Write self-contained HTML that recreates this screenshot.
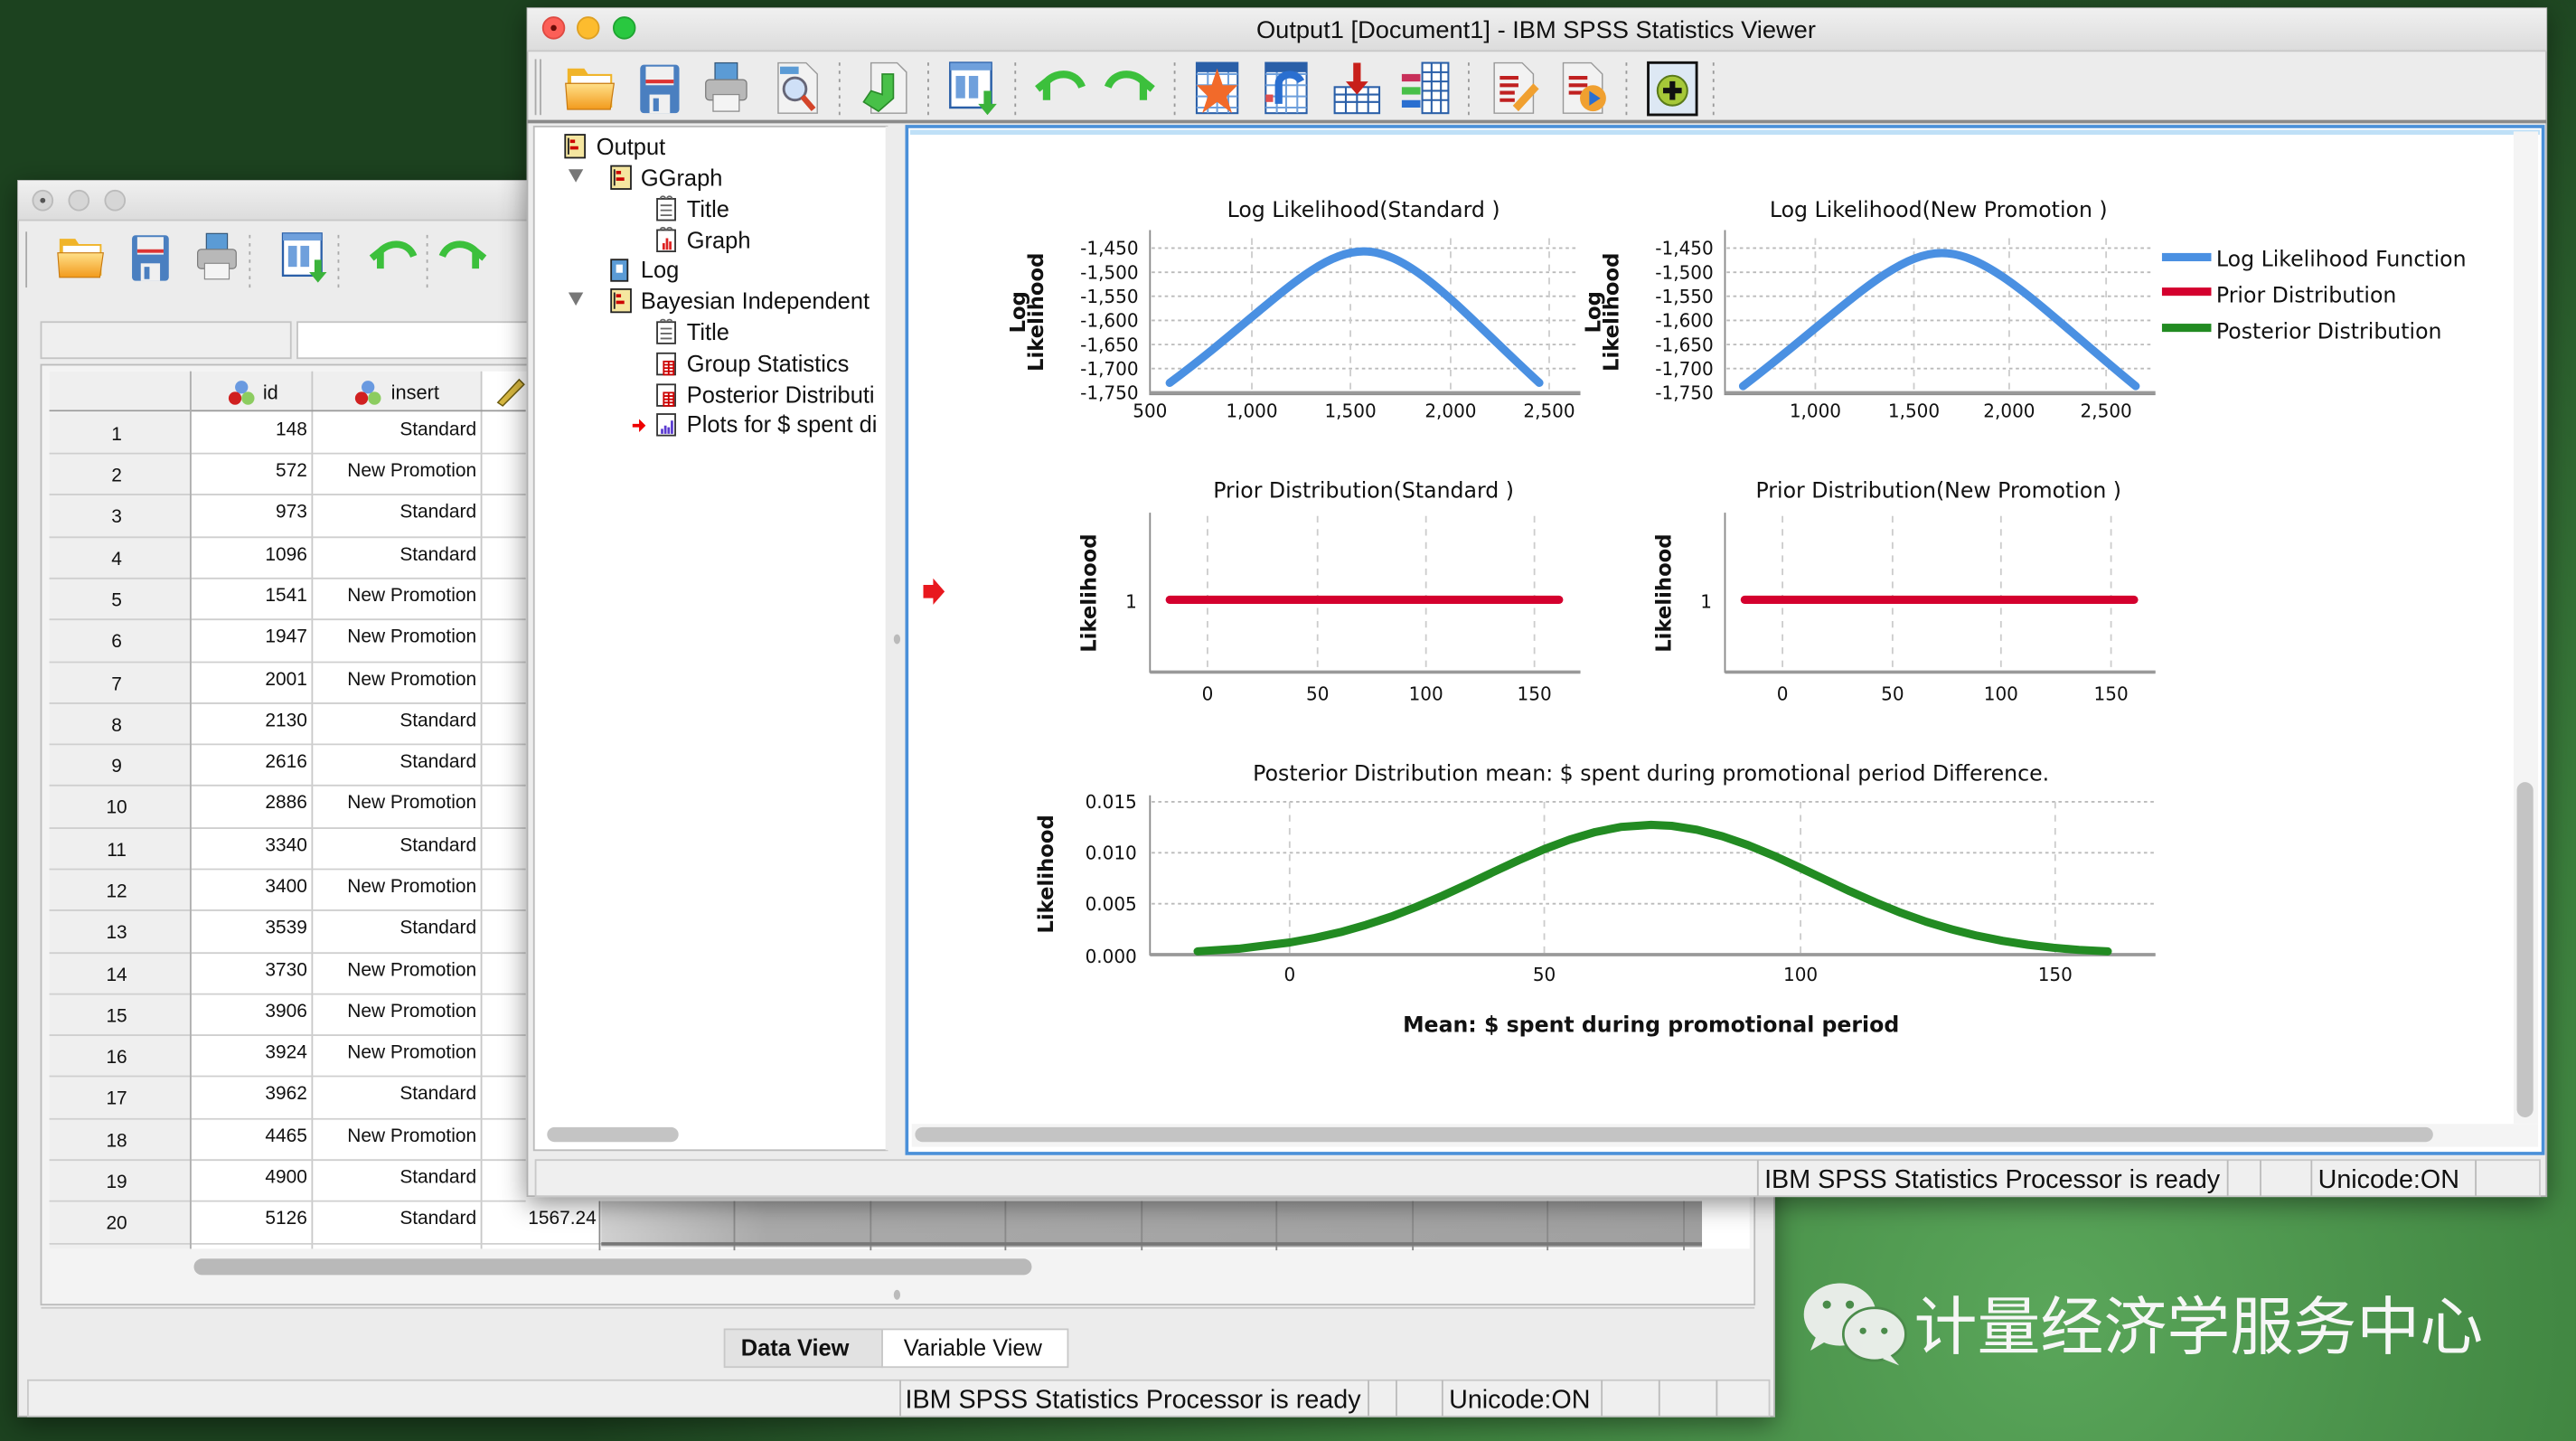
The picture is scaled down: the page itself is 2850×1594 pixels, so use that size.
<!DOCTYPE html>
<html><head><meta charset="utf-8"><style>
html,body{margin:0;padding:0;width:2850px;height:1594px;overflow:hidden;background:#1f4a22}
svg{display:block}
text{font-family:"Liberation Sans","Noto Sans CJK SC",sans-serif;fill:#111}
.t13{font-size:14px}.t11{font-size:11.5px}.t12{font-size:12px}.t14{font-size:14px}.t15{font-size:15.8px}
.b{font-weight:bold}
.ch text{font-family:"DejaVu Sans",sans-serif}
.ch .tt{font-size:13px}
</style></head><body>
<svg width="2850" height="1594" viewBox="0 0 1568 877" xmlns="http://www.w3.org/2000/svg">
<defs>
<radialGradient id="bg" cx="1250" cy="800" r="900" gradientUnits="userSpaceOnUse">
<stop offset="0" stop-color="#5aa65a"/><stop offset="0.45" stop-color="#3b7f3c"/><stop offset="1" stop-color="#1c421f"/></radialGradient>
<linearGradient id="tb" x1="0" y1="0" x2="0" y2="1"><stop offset="0" stop-color="#f0f0f0"/><stop offset="1" stop-color="#dcdcdc"/></linearGradient>
<linearGradient id="fold" x1="0" y1="0" x2="0" y2="1"><stop offset="0" stop-color="#ffe08a"/><stop offset="1" stop-color="#f29a1c"/></linearGradient>
<linearGradient id="gr" x1="0" y1="0" x2="1" y2="0"><stop offset="0" stop-color="#d0d0d0"/><stop offset="0.15" stop-color="#a9a9a9"/><stop offset="1" stop-color="#a0a0a0"/></linearGradient>
<filter id="sh" x="-5%" y="-5%" width="110%" height="115%"><feDropShadow dx="0" dy="4" stdDeviation="8" flood-color="#000" flood-opacity="0.45"/></filter>
<symbol id="folder" viewBox="0 0 30 30"><path d="M3 5h9l2 3h13v18H3z" fill="#f0b429"/><rect x="5" y="9" width="21" height="6" fill="#fff"/><path d="M2 13h26l-2 14H3z" fill="url(#fold)" stroke="#c87a10" stroke-width=".6"/></symbol>
<symbol id="save" viewBox="0 0 30 30"><rect x="5" y="3" width="21" height="26" rx="2" fill="#4a7fc0"/><rect x="8" y="4" width="15" height="10" fill="#f0f0f0"/><rect x="8" y="11" width="15" height="2" fill="#d33"/><rect x="10" y="19" width="11" height="10" fill="#f0f0f0"/><rect x="12" y="21" width="3" height="7" fill="#4a7fc0"/></symbol>
<symbol id="print" viewBox="0 0 30 30"><rect x="9" y="2" width="12" height="10" fill="#5b9bd5" stroke="#357" stroke-width=".6"/><rect x="4" y="11" width="22" height="11" rx="2" fill="#b8b8b8" stroke="#777" stroke-width=".6"/><rect x="8" y="19" width="14" height="9" fill="#f4f4f4" stroke="#888" stroke-width=".6"/></symbol>
<symbol id="prev" viewBox="0 0 30 30"><path d="M5 2h15l6 6v21H5z" fill="#f2f2f2" stroke="#999" stroke-width=".7"/><rect x="6" y="4" width="10" height="4" fill="#5b9bd5"/><circle cx="14" cy="16" r="6" fill="#cfe0f7" stroke="#667" stroke-width="1.4"/><path d="M18 20l6 7" stroke="#d4452a" stroke-width="3"/></symbol>
<symbol id="export" viewBox="0 0 30 30"><path d="M9 2h14l5 5v22H9z" fill="#f2f2f2" stroke="#999" stroke-width=".7"/><path d="M15 8v11l-6-2-4 6 8 5 8-7V8z" fill="#48c048" stroke="#2a8a2a" stroke-width=".8"/></symbol>
<symbol id="desig" viewBox="0 0 30 30"><rect x="3" y="2" width="22" height="24" fill="#fff" stroke="#2a5fa8" stroke-width="1.2"/><rect x="3" y="2" width="22" height="4" fill="#6fa0dc"/><rect x="6" y="9" width="5" height="12" fill="#6fa0dc"/><rect x="13" y="9" width="5" height="12" fill="#6fa0dc"/><path d="M21 17v7h-3l5 6 5-6h-3v-7z" fill="#3bb33b"/></symbol>
<symbol id="undo" viewBox="0 0 30 30"><path d="M8 22V12l-5 4M8 12c6-6 16-5 19 3" fill="none" stroke="#3cc03c" stroke-width="4" stroke-linejoin="round"/></symbol>
<symbol id="redo" viewBox="0 0 30 30"><path d="M22 22V12l5 4M22 12c-6-6-16-5-19 3" fill="none" stroke="#3cc03c" stroke-width="4" stroke-linejoin="round"/></symbol>
<symbol id="grid" viewBox="0 0 30 30"><rect x="3" y="2" width="22" height="27" fill="#fff" stroke="#2a5fa8"/><path d="M3 8h22M3 14h22M3 20h22M3 26h22M9 2v27M14 2v27M20 2v27" stroke="#6fa0dc" stroke-width="1"/><rect x="3" y="2" width="22" height="5" fill="#2a5fa8"/></symbol>
<symbol id="star" viewBox="0 0 30 30"><use href="#grid"/><path d="M14 5l3 9h8l-6 6 3 9-8-6-8 6 3-9-6-6h8z" fill="#f26a2a"/></symbol>
<symbol id="gotoc" viewBox="0 0 30 30"><use href="#grid"/><path d="M10 24V13c0-5 9-7 12-1" fill="none" stroke="#2a6fd0" stroke-width="4"/><rect x="3" y="19" width="4" height="4" fill="#e05050"/></symbol>
<symbol id="insv" viewBox="0 0 30 30"><rect x="3" y="15" width="24" height="14" fill="#fff" stroke="#2a5fa8"/><path d="M3 19h24M3 23h24M9 15v14M15 15v14M21 15v14" stroke="#2a5fa8"/><path d="M13 2h4v10h4l-6 7-6-7h4z" fill="#c8201a"/></symbol>
<symbol id="splt" viewBox="0 0 30 30"><rect x="13" y="2" width="14" height="27" fill="#fff" stroke="#2a5fa8"/><path d="M13 7h14M13 12h14M13 17h14M13 22h14M18 2v27M23 2v27" stroke="#2a5fa8"/><rect x="2" y="8" width="10" height="4" fill="#c8305a"/><rect x="2" y="15" width="10" height="4" fill="#48c048"/><rect x="2" y="22" width="10" height="4" fill="#2a6fd0"/></symbol>
<symbol id="edit" viewBox="0 0 30 30"><path d="M4 2h15l6 6v21H4z" fill="#f2f2f2" stroke="#999" stroke-width=".7"/><path d="M7 10h10M7 14h10M7 18h8M7 22h8" stroke="#c02020" stroke-width="2"/><path d="M14 25l11-12 3 3-11 12z" fill="#f0a030"/></symbol>
<symbol id="play" viewBox="0 0 30 30"><path d="M4 2h15l6 6v21H4z" fill="#f2f2f2" stroke="#999" stroke-width=".7"/><path d="M7 10h10M7 14h10M7 18h8" stroke="#c02020" stroke-width="2"/><circle cx="20" cy="21" r="7" fill="#f0a030"/><path d="M18 17l6 4-6 4z" fill="#2a6fd0"/></symbol>
<symbol id="plus" viewBox="0 0 30 30"><rect x="2" y="1" width="26" height="28" fill="#dde8f4" stroke="#111" stroke-width="1.4"/><circle cx="15" cy="16" r="8" fill="#a6c838" stroke="#5a7a1a"/><path d="M15 11v10M10 16h10" stroke="#111" stroke-width="3"/></symbol>
<symbol id="book" viewBox="0 0 16 16"><rect x="2" y="1" width="12" height="14" fill="#f5e6a0" stroke="#222" stroke-width="1"/><rect x="5" y="4" width="3" height="2" fill="#c00"/><rect x="5" y="8" width="5" height="2" fill="#c00"/><path d="M4 3v10" stroke="#222"/></symbol>
<symbol id="page" viewBox="0 0 16 16"><rect x="3" y="2" width="11" height="13" fill="#fff" stroke="#333"/><path d="M5 6h7M5 9h7M5 12h7" stroke="#666"/><path d="M5 2c0-2 3-2 3 0M9 2c0-2 3-2 3 0" fill="none" stroke="#666"/></symbol>
<symbol id="gph" viewBox="0 0 16 16"><rect x="3" y="2" width="11" height="13" fill="#fff" stroke="#333"/><path d="M7 14v-4M9 14v-7M11 14v-5" stroke="#d22" stroke-width="1.5"/><path d="M5 2c0-2 3-2 3 0M9 2c0-2 3-2 3 0" fill="none" stroke="#666"/></symbol>
<symbol id="tbl" viewBox="0 0 16 16"><rect x="3" y="2" width="11" height="13" fill="#fff" stroke="#333"/><rect x="7" y="7" width="6" height="8" fill="#fff" stroke="#c00"/><path d="M7 9h6M7 11h6M7 13h6M10 7v8" stroke="#c00"/></symbol>
<symbol id="plots" viewBox="0 0 16 16"><rect x="3" y="2" width="11" height="13" fill="#fff" stroke="#333"/><path d="M6 14v-3M8 14v-5M10 14v-4M12 14v-8" stroke="#5a3ad0" stroke-width="1.5"/></symbol>
<symbol id="logi" viewBox="0 0 16 16"><rect x="3" y="2" width="10" height="13" fill="#5b9bd5" stroke="#222"/><rect x="6" y="5" width="4" height="5" fill="#fff"/></symbol>
<symbol id="var" viewBox="0 0 16 16"><circle cx="8" cy="5" r="3.5" fill="#6a9ae0"/><circle cx="4.5" cy="11" r="3.5" fill="#d02020"/><circle cx="11.5" cy="11" r="3.5" fill="#8ccc60"/></symbol>
</defs>

<rect width="1568" height="877" fill="url(#bg)"/>

<!-- ============ DATA EDITOR ============ -->
<g filter="url(#sh)">
<rect x="11" y="110" width="1069" height="752" fill="#ececec" stroke="#b8b8b8"/>
</g>
<rect x="11" y="110" width="1069" height="24" fill="url(#tb)"/>
<circle cx="26" cy="122" r="6" fill="#d6d6d6" stroke="#bbb"/><circle cx="26" cy="122" r="1.6" fill="#555"/>
<circle cx="48" cy="122" r="6" fill="#d6d6d6" stroke="#bbb"/><circle cx="70" cy="122" r="6" fill="#d6d6d6" stroke="#bbb"/>
<line x1="11" y1="134" x2="1080" y2="134" stroke="#c8c8c8"/>
<line x1="16" y1="141" x2="16" y2="175" stroke="#aaa"/>
<use href="#folder" x="33" y="140" width="32" height="32"/>
<use href="#save" x="75" y="140" width="32" height="32"/>
<use href="#print" x="116" y="140" width="32" height="32"/>
<use href="#desig" x="169" y="140" width="32" height="32"/>
<use href="#undo" x="223" y="140" width="32" height="32"/>
<use href="#redo" x="266" y="140" width="32" height="32"/>
<path d="M152 143v32M206 143v32M260 143v32" stroke="#aaa" stroke-dasharray="2 3"/>
<rect x="25" y="196" width="152" height="22" fill="#efefef" stroke="#c4c4c4"/>
<rect x="181" y="196" width="890" height="22" fill="#fff" stroke="#c4c4c4"/>
<rect x="25" y="222" width="1043" height="572" fill="#f3f3f3" stroke="#bcbcbc"/>
<rect x="30" y="226" width="1035" height="534" fill="#fff"/>
<rect x="30" y="226" width="263" height="24" fill="#efefef"/>
<path d="M116 226v534M190 226v534M293 226v534" stroke="#c8c8c8"/>
<line x1="30" y1="250" x2="320" y2="250" stroke="#999"/>
<use href="#var" x="138" y="230" width="18" height="18"/><text x="160" y="243" class="t12">id</text>
<use href="#var" x="215" y="230" width="18" height="18"/><text x="238" y="243" class="t12">insert</text>
<path d="M303 245l13-14 3 3-13 13z" fill="#d8b840" stroke="#6a5a10" stroke-width=".8"/>
<g font-size="11.5">
<rect x="30" y="251" width="86" height="509" fill="#efefef"/>
<path d="M30 276h290M30 301h290M30 327h290M30 352h290M30 377h290M30 403h290M30 428h290M30 453h290M30 478h290M30 504h290M30 529h290M30 554h290M30 580h290M30 605h290M30 630h290M30 655h290M30 681h290M30 706h290M30 731h290M30 757h337" stroke="#cfcfcf"/>
<path d="M116 226v534" stroke="#b0b0b0"/>
<g text-anchor="middle">
<text x="71" y="268">1</text><text x="71" y="293">2</text><text x="71" y="318">3</text><text x="71" y="344">4</text><text x="71" y="369">5</text><text x="71" y="394">6</text><text x="71" y="420">7</text><text x="71" y="445">8</text><text x="71" y="470">9</text><text x="71" y="495">10</text><text x="71" y="521">11</text><text x="71" y="546">12</text><text x="71" y="571">13</text><text x="71" y="597">14</text><text x="71" y="622">15</text><text x="71" y="647">16</text><text x="71" y="672">17</text><text x="71" y="698">18</text><text x="71" y="723">19</text><text x="71" y="748">20</text>
</g>
<g text-anchor="end">
<text x="187" y="265">148</text><text x="187" y="290">572</text><text x="187" y="315">973</text><text x="187" y="341">1096</text><text x="187" y="366">1541</text><text x="187" y="391">1947</text><text x="187" y="417">2001</text><text x="187" y="442">2130</text><text x="187" y="467">2616</text><text x="187" y="492">2886</text><text x="187" y="518">3340</text><text x="187" y="543">3400</text><text x="187" y="568">3539</text><text x="187" y="594">3730</text><text x="187" y="619">3906</text><text x="187" y="644">3924</text><text x="187" y="669">3962</text><text x="187" y="695">4465</text><text x="187" y="720">4900</text><text x="187" y="745">5126</text>
<text x="290" y="265">Standard</text><text x="290" y="290">New Promotion</text><text x="290" y="315">Standard</text><text x="290" y="341">Standard</text><text x="290" y="366">New Promotion</text><text x="290" y="391">New Promotion</text><text x="290" y="417">New Promotion</text><text x="290" y="442">Standard</text><text x="290" y="467">Standard</text><text x="290" y="492">New Promotion</text><text x="290" y="518">Standard</text><text x="290" y="543">New Promotion</text><text x="290" y="568">Standard</text><text x="290" y="594">New Promotion</text><text x="290" y="619">New Promotion</text><text x="290" y="644">New Promotion</text><text x="290" y="669">Standard</text><text x="290" y="695">New Promotion</text><text x="290" y="720">Standard</text><text x="290" y="745">Standard</text>
<text x="363" y="745">1567.24</text>
</g>
</g>
<rect x="366" y="731" width="670" height="28" fill="url(#gr)"/>
<path d="M365 731v30M447 731v30M530 731v30M612 731v30M695 731v30M777 731v30M860 731v30M942 731v30M1025 731v30" stroke="#8a8a8a"/>
<line x1="366" y1="757" x2="1036" y2="757" stroke="#777" stroke-width="2"/>
<rect x="118" y="766" width="510" height="10" rx="5" fill="#b9b9b9"/>
<ellipse cx="546" cy="788" rx="2" ry="3" fill="#bbb"/>
<line x1="25" y1="796" x2="1068" y2="796" stroke="#c8c8c8"/>
<rect x="441" y="809" width="96" height="23" fill="#e2e2e2" stroke="#c8c8c8"/>
<rect x="537" y="809" width="113" height="23" fill="#fff" stroke="#c8c8c8"/>
<text x="451" y="825" class="t14 b">Data View</text>
<text x="550" y="825" class="t14">Variable View</text>
<rect x="17" y="840" width="1060" height="22" fill="#efefef" stroke="#c8c8c8"/>
<path d="M548 840v22M833 840v22M850 840v22M878 840v22M975 840v22M1010 840v22M1045 840v22" stroke="#bbb"/>
<text x="551" y="857" class="t15">IBM SPSS Statistics Processor is ready</text>
<text x="882" y="857" class="t15">Unicode:ON</text>

<!-- ============ VIEWER ============ -->
<g filter="url(#sh)">
<rect x="321" y="5" width="1229" height="723" fill="#ececec" stroke="#b0b0b0"/>
</g>
<rect x="321" y="5" width="1229" height="26" fill="url(#tb)"/>
<circle cx="337" cy="17" r="6.5" fill="#fc5f57" stroke="#de4a42"/><circle cx="337" cy="17" r="1.8" fill="#6a0d08"/>
<circle cx="358" cy="17" r="6.5" fill="#fdbc2e" stroke="#dea023"/>
<circle cx="380" cy="17" r="6.5" fill="#29c840" stroke="#1fa431"/>
<text x="935" y="23" font-size="15" text-anchor="middle" fill="#333">Output1 [Document1] - IBM SPSS Statistics Viewer</text>
<line x1="321" y1="31" x2="1550" y2="31" stroke="#c8c8c8"/>
<line x1="326" y1="36" x2="326" y2="70" stroke="#aaa"/><line x1="329" y1="36" x2="329" y2="70" stroke="#aaa"/>
<use href="#folder" x="342" y="36" width="34" height="34"/>
<use href="#save" x="384" y="36" width="34" height="34"/>
<use href="#print" x="425" y="36" width="34" height="34"/>
<use href="#prev" x="468" y="36" width="34" height="34"/>
<use href="#export" x="520" y="36" width="34" height="34"/>
<use href="#desig" x="575" y="36" width="34" height="34"/>
<use href="#undo" x="628" y="36" width="34" height="34"/>
<use href="#redo" x="671" y="36" width="34" height="34"/>
<use href="#star" x="725" y="36" width="34" height="34"/>
<use href="#gotoc" x="767" y="36" width="34" height="34"/>
<use href="#insv" x="809" y="36" width="34" height="34"/>
<use href="#splt" x="851" y="36" width="34" height="34"/>
<use href="#edit" x="905" y="36" width="34" height="34"/>
<use href="#play" x="947" y="36" width="34" height="34"/>
<use href="#plus" x="1001" y="37" width="34" height="34"/>
<path d="M511 38v32M565 38v32M618 38v32M715 38v32M894 38v32M990 38v32M1043 38v32" stroke="#999" stroke-dasharray="2 3"/>
<line x1="321" y1="74" x2="1550" y2="74" stroke="#8a8a8a" stroke-width="2"/>

<!-- tree pane -->
<rect x="325" y="77" width="215" height="623" fill="#fff" stroke="#bbb"/>
<g class="t13">
<use href="#book" x="342" y="81" width="16" height="16"/><text x="363" y="94">Output</text>
<path d="M346 103h9l-4.5 8z" fill="#777"/>
<use href="#book" x="370" y="100" width="16" height="16"/><text x="390" y="113">GGraph</text>
<use href="#page" x="397" y="119" width="16" height="16"/><text x="418" y="132">Title</text>
<use href="#gph" x="397" y="138" width="16" height="16"/><text x="418" y="151">Graph</text>
<use href="#logi" x="369" y="156" width="16" height="16"/><text x="390" y="169">Log</text>
<path d="M346 178h9l-4.5 8z" fill="#777"/>
<use href="#book" x="370" y="175" width="16" height="16"/><text x="390" y="188">Bayesian Independent</text>
<use href="#page" x="397" y="194" width="16" height="16"/><text x="418" y="207">Title</text>
<use href="#tbl" x="397" y="213" width="16" height="16"/><text x="418" y="226">Group Statistics</text>
<use href="#tbl" x="397" y="232" width="16" height="16"/><text x="418" y="245">Posterior Distributi</text>
<path d="M385 258h4v-3l4 4-4 4v-3h-4z" fill="#e00"/>
<use href="#plots" x="397" y="250" width="16" height="16"/><text x="418" y="263">Plots for $ spent di</text>
</g>
<rect x="539" y="77" width="4" height="623" fill="#ececec"/>
<rect x="333" y="686" width="80" height="9" rx="4.5" fill="#c4c4c4"/>
<ellipse cx="546" cy="389" rx="2" ry="3" fill="#bbb"/>

<!-- content pane -->
<rect x="552" y="77" width="996" height="625" fill="#fff" stroke="#4a90d9" stroke-width="2"/>
<rect x="554" y="79" width="992" height="3" fill="#bfe0f7"/>
<rect x="1530" y="80" width="15" height="604" fill="#f4f4f4"/>
<rect x="1532" y="476" width="10" height="204" rx="5" fill="#c4c4c4"/>
<rect x="555" y="684" width="990" height="14" fill="#f4f4f4"/>
<rect x="557" y="686" width="924" height="9" rx="4.5" fill="#c4c4c4"/>
<path d="M562 356h6v-4l7 8-7 8v-4h-6z" fill="#e8181e"/>

<g class="ch">
<!-- chart 1 -->
<g font-size="11" fill="#222">
<text x="830" y="132" class="tt" text-anchor="middle">Log Likelihood(Standard )</text>
<path d="M701 151h260M701 165.7h260M701 180.3h260M701 195h260M701 209.7h260M701 224.3h260" stroke="#bbb" stroke-dasharray="2 2"/>
<path d="M762 145v94M822 145v94M883 145v94M943 145v94" stroke="#ccc" stroke-dasharray="4 4"/>
<path d="M700 140v100h262" fill="none" stroke="#888"/>
<line x1="700" y1="239" x2="962" y2="239" stroke="#999" stroke-width="2"/>
<g text-anchor="end"><text x="693" y="155">-1,450</text><text x="693" y="169.7">-1,500</text><text x="693" y="184.3">-1,550</text><text x="693" y="199">-1,600</text><text x="693" y="213.7">-1,650</text><text x="693" y="228.3">-1,700</text><text x="693" y="243">-1,750</text></g>
<g text-anchor="middle"><text x="700" y="254">500</text><text x="762" y="254">1,000</text><text x="822" y="254">1,500</text><text x="883" y="254">2,000</text><text x="943" y="254">2,500</text></g>
<path d="M712 233C770 190 800 153 830 153C860 153 890 190 937 233" fill="none" stroke="#4a90e2" stroke-width="5" stroke-linecap="round"/>
<text transform="translate(624,190) rotate(-90)" text-anchor="middle" font-size="12.5" font-weight="bold" fill="#111">Log</text>
<text transform="translate(635,190) rotate(-90)" text-anchor="middle" font-size="12.5" font-weight="bold" fill="#111">Likelihood</text>
</g>
<!-- chart 2 -->
<g font-size="11" fill="#222">
<text x="1180" y="132" class="tt" text-anchor="middle">Log Likelihood(New Promotion )</text>
<path d="M1051 151h260M1051 165.7h260M1051 180.3h260M1051 195h260M1051 209.7h260M1051 224.3h260" stroke="#bbb" stroke-dasharray="2 2"/>
<path d="M1105 145v94M1165 145v94M1223 145v94M1282 145v94" stroke="#ccc" stroke-dasharray="4 4"/>
<path d="M1050 140v100h262" fill="none" stroke="#888"/>
<line x1="1050" y1="239" x2="1312" y2="239" stroke="#999" stroke-width="2"/>
<g text-anchor="end"><text x="1043" y="155">-1,450</text><text x="1043" y="169.7">-1,500</text><text x="1043" y="184.3">-1,550</text><text x="1043" y="199">-1,600</text><text x="1043" y="213.7">-1,650</text><text x="1043" y="228.3">-1,700</text><text x="1043" y="243">-1,750</text></g>
<g text-anchor="middle"><text x="1105" y="254">1,000</text><text x="1165" y="254">1,500</text><text x="1223" y="254">2,000</text><text x="1282" y="254">2,500</text></g>
<path d="M1061 235C1120 190 1152 154 1182 154C1212 154 1245 190 1300 235" fill="none" stroke="#4a90e2" stroke-width="5" stroke-linecap="round"/>
<text transform="translate(974,190) rotate(-90)" text-anchor="middle" font-size="12.5" font-weight="bold" fill="#111">Log</text>
<text transform="translate(985,190) rotate(-90)" text-anchor="middle" font-size="12.5" font-weight="bold" fill="#111">Likelihood</text>
</g>
<!-- legend -->
<rect x="1316" y="154" width="30" height="5" fill="#4a90e2"/><text x="1349" y="162" class="tt">Log Likelihood Function</text>
<rect x="1316" y="175" width="30" height="5" fill="#d4002e"/><text x="1349" y="184" class="tt">Prior Distribution</text>
<rect x="1316" y="197" width="30" height="5" fill="#228b22"/><text x="1349" y="206" class="tt">Posterior Distribution</text>

<!-- prior charts -->
<g font-size="11" fill="#222">
<text x="830" y="303" class="tt" text-anchor="middle">Prior Distribution(Standard )</text>
<path d="M735 314v94M802 314v94M868 314v94M934 314v94" stroke="#ccc" stroke-dasharray="4 4"/>
<path d="M700 312v97h262" fill="none" stroke="#888"/><line x1="700" y1="409" x2="962" y2="409" stroke="#999" stroke-width="2"/>
<text x="692" y="370" text-anchor="end">1</text>
<g text-anchor="middle"><text x="735" y="426">0</text><text x="802" y="426">50</text><text x="868" y="426">100</text><text x="934" y="426">150</text></g>
<line x1="712" y1="365" x2="949" y2="365" stroke="#d4002e" stroke-width="5" stroke-linecap="round"/>
<text transform="translate(667,361) rotate(-90)" text-anchor="middle" font-size="12.5" font-weight="bold" fill="#111">Likelihood</text>

<text x="1180" y="303" class="tt" text-anchor="middle">Prior Distribution(New Promotion )</text>
<path d="M1085 314v94M1152 314v94M1218 314v94M1285 314v94" stroke="#ccc" stroke-dasharray="4 4"/>
<path d="M1050 312v97h262" fill="none" stroke="#888"/><line x1="1050" y1="409" x2="1312" y2="409" stroke="#999" stroke-width="2"/>
<text x="1042" y="370" text-anchor="end">1</text>
<g text-anchor="middle"><text x="1085" y="426">0</text><text x="1152" y="426">50</text><text x="1218" y="426">100</text><text x="1285" y="426">150</text></g>
<line x1="1062" y1="365" x2="1299" y2="365" stroke="#d4002e" stroke-width="5" stroke-linecap="round"/>
<text transform="translate(1017,361) rotate(-90)" text-anchor="middle" font-size="12.5" font-weight="bold" fill="#111">Likelihood</text>
</g>

<!-- posterior -->
<g font-size="11" fill="#222">
<text x="1005" y="475" class="tt" text-anchor="middle">Posterior Distribution mean: $ spent during promotional period Difference.</text>
<path d="M701 488h610M701 519h610M701 550h610" stroke="#bbb" stroke-dasharray="2 2"/>
<path d="M785 488v93M940 488v93M1096 488v93M1251 488v93" stroke="#ccc" stroke-dasharray="4 4"/>
<path d="M700 484v97h612" fill="none" stroke="#888"/><line x1="700" y1="581" x2="1312" y2="581" stroke="#999" stroke-width="2"/>
<g text-anchor="end"><text x="692" y="492">0.015</text><text x="692" y="523">0.010</text><text x="692" y="554">0.005</text><text x="692" y="586">0.000</text></g>
<g text-anchor="middle"><text x="785" y="597">0</text><text x="940" y="597">50</text><text x="1096" y="597">100</text><text x="1251" y="597">150</text></g>
<polyline points="729,579 754,577.4 785,573.6 800.5,570.8 816,567.3 831.5,562.9 847,557.8 862.5,551.8 878,545.2 893.5,538.1 909,530.7 924.5,523.5 940,516.8 955.5,511 971,506.4 986.5,503.3 1005,502 1017.5,502.6 1033,505 1048.5,509 1064,514.3 1079.5,520.7 1095,527.8 1110.5,535.1 1126,542.4 1141.5,549.2 1157,555.5 1172.5,561 1188,565.6 1203.5,569.5 1219,572.6 1234.5,575 1250,576.8 1265.5,578.1 1283,579" fill="none" stroke="#228b22" stroke-width="5" stroke-linecap="round" stroke-linejoin="round"/>
<text transform="translate(641,532) rotate(-90)" text-anchor="middle" font-size="12.5" font-weight="bold" fill="#111">Likelihood</text>
<text x="1005" y="628" font-size="13" font-weight="bold" text-anchor="middle" fill="#111">Mean: $ spent during promotional period</text>
</g>
</g>

<!-- viewer status -->
<rect x="326" y="706" width="1220" height="22" fill="#efefef" stroke="#c8c8c8"/>
<path d="M1070 706v22M1356 706v22M1376 706v22M1407 706v22M1507 706v22" stroke="#bbb"/>
<text x="1074" y="723" class="t15">IBM SPSS Statistics Processor is ready</text>
<text x="1411" y="723" class="t15">Unicode:ON</text>

<!-- watermark -->
<g opacity="0.92">
<ellipse cx="1120" cy="800" rx="22" ry="19" fill="#f4f4f4"/>
<path d="M1106 812l-4 10 10-6z" fill="#f4f4f4"/>
<ellipse cx="1141" cy="812" rx="19" ry="16" fill="#f4f4f4" stroke="#4a8a4a" stroke-width="1.5"/>
<path d="M1150 824l6 7-10-4z" fill="#f4f4f4"/>
<circle cx="1112" cy="794" r="2.5" fill="#4a8a4a"/><circle cx="1126" cy="794" r="2.5" fill="#4a8a4a"/>
<circle cx="1134" cy="810" r="2" fill="#4a8a4a"/><circle cx="1147" cy="810" r="2" fill="#4a8a4a"/>
</g>
<text x="1165" y="821" font-size="38.5" style="fill:#f6f6f6">计量经济学服务中心</text>
</svg>
</body></html>
